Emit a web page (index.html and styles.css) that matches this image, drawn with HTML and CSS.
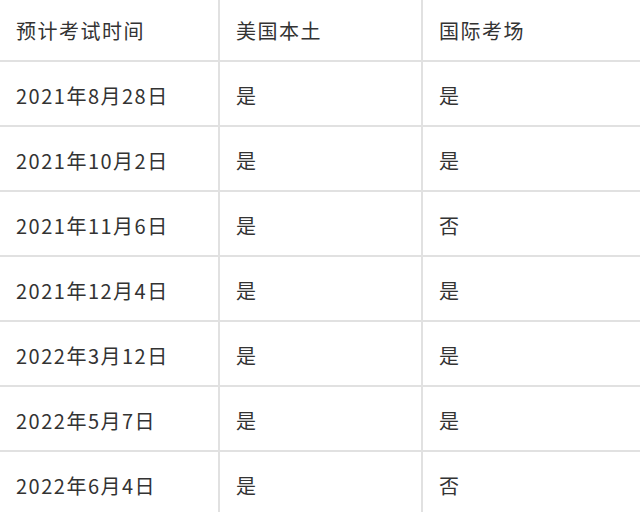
FILE: index.html
```
<!DOCTYPE html>
<html lang="zh-CN">
<head>
<meta charset="utf-8">
<link rel="stylesheet" href="styles.css">
</head>
<body>
<table class="schedule">
  <colgroup>
    <col class="c1">
    <col class="c2">
    <col class="c3">
  </colgroup>
  <thead>
    <tr><th>预计考试时间</th><th>美国本土</th><th>国际考场</th></tr>
  </thead>
  <tbody>
    <tr><td>2021年8月28日</td><td>是</td><td>是</td></tr>
    <tr><td>2021年10月2日</td><td>是</td><td>是</td></tr>
    <tr><td>2021年11月6日</td><td>是</td><td>否</td></tr>
    <tr><td>2021年12月4日</td><td>是</td><td>是</td></tr>
    <tr><td>2022年3月12日</td><td>是</td><td>是</td></tr>
    <tr><td>2022年5月7日</td><td>是</td><td>是</td></tr>
    <tr><td>2022年6月4日</td><td>是</td><td>否</td></tr>
  </tbody>
</table>
</body>
</html>
```

FILE: styles.css
```
html, body {
  margin: 0;
  padding: 0;
  background: #ffffff;
  overflow: hidden;
}

.schedule {
  margin-top: -3px;
  border-collapse: separate;
  border-spacing: 0;
  table-layout: fixed;
  width: 660px;
  font-family: "Noto Sans CJK SC", "Noto Sans", sans-serif;
  font-size: 20px;
  letter-spacing: 1.5px;
  color: #333333;
}

.c1 { width: 220px; }
.c2 { width: 203px; }
.c3 { width: 237px; }

.schedule th,
.schedule td {
  box-sizing: border-box;
  height: 65px;
  padding: 4px 16px 0 16px;
  text-align: left;
  font-weight: normal;
  vertical-align: middle;
  white-space: nowrap;
  border-right: 2px solid #e1e1e1;
  border-bottom: 2px solid #e1e1e1;
}

.schedule th:last-child,
.schedule td:last-child {
  border-right: none;
}
```
